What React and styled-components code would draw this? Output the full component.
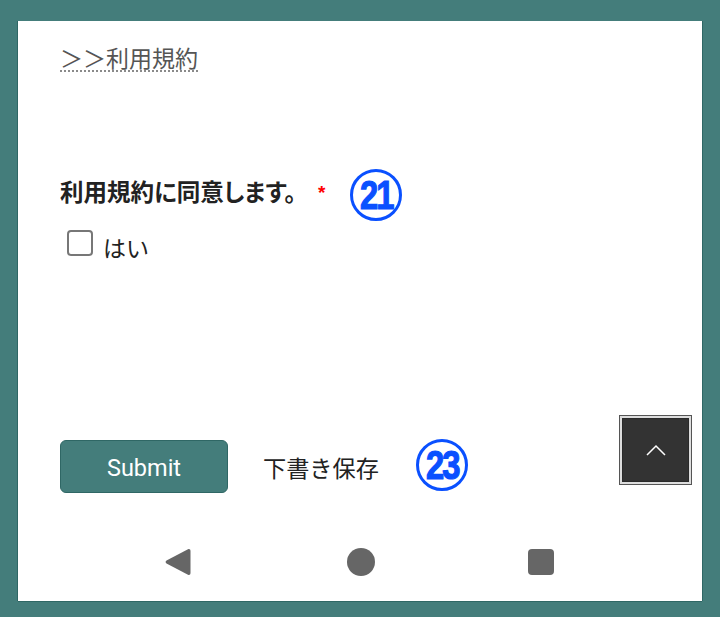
import React from "react";
import styled, { createGlobalStyle } from "styled-components";

const Global = createGlobalStyle`
  html, body { margin: 0; padding: 0; }
  body {
    background: #447d7b;
    font-family: "Roboto", "Noto Sans CJK JP", sans-serif;
  }
`;

const Page = styled.div`
  width: 720px;
  height: 617px;
  padding: 21px 18px 16px;
  box-sizing: border-box;
  background: #447d7b;
`;

const Screen = styled.main`
  position: relative;
  height: 580px;
  box-sizing: border-box;
  padding: 22px 42px 0;
  background: #fff;
  display: flex;
  flex-direction: column;
  box-shadow: -1px 0 0 #2f6765, 0 1px 0 #2f6765, 1px 0 0 #2f6765;
`;

const TermsLink = styled.a`
  align-self: flex-start;
  font-family: "Noto Sans CJK JP", sans-serif;
  font-size: 23px;
  line-height: 29px;
  color: #555;
  border-bottom: 2px dotted #8a8a8a;
  height: 27px;
  margin-bottom: 97px;
`;

const Question = styled.div`
  display: flex;
  align-items: center;
  height: 52px;
`;

const Label = styled.label`
  font-family: "Noto Sans CJK JP", sans-serif;
  font-size: 23.5px;
  font-weight: 700;
  font-feature-settings: "palt";
  color: #222;
  line-height: 30px;
  margin-bottom: 8px;
`;

const Required = styled.span`
  font-family: "Liberation Sans", sans-serif;
  color: #f00;
  font-size: 19px;
  font-weight: 700;
  margin-left: 22px;
  margin-right: 25px;
  margin-bottom: 4px;
`;

const Badge = styled.span`
  width: 52px;
  height: 52px;
  flex: none;
  box-sizing: border-box;
  border: 3px solid #0a50ff;
  border-radius: 50%;
  color: #0a50ff;
  display: flex;
  align-items: center;
  justify-content: center;
`;

const BadgeText = styled.span`
  display: inline-block;
  font-family: "Liberation Sans", sans-serif;
  font-size: 41px;
  line-height: 1;
  font-weight: 700;
  letter-spacing: -2.5px;
  -webkit-text-stroke: 1.2px #0a50ff;
  transform: scaleX(0.8);
`;

const DraftBadge = styled(Badge)`
  margin-bottom: 3px;
`;

const CheckRow = styled.div`
  display: flex;
  align-items: flex-start;
  margin: 9px 0 0 7px;
  height: 28px;
`;

const CheckBox = styled.span`
  width: 26px;
  height: 26px;
  box-sizing: border-box;
  border: 2px solid #777;
  border-radius: 4px;
  background: #fff;
  margin-right: 10px;
`;

const CheckText = styled.span`
  font-family: "Noto Sans CJK JP", sans-serif;
  font-size: 23px;
  line-height: 28px;
  color: #222;
  padding-top: 3px;
`;

const Actions = styled.div`
  display: flex;
  align-items: center;
  height: 53px;
  margin-top: 182px;
`;

const SubmitButton = styled.button`
  width: 168px;
  height: 53px;
  box-sizing: border-box;
  border: 1px solid #2f6765;
  border-radius: 6px;
  background: #447d7b;
  color: #fff;
  font-family: "Roboto", sans-serif;
  font-size: 23.5px;
  padding: 2px 0 0;
`;

const DraftButton = styled.span`
  font-family: "Noto Sans CJK JP", sans-serif;
  font-size: 23.2px;
  color: #222;
  margin-left: 35px;
  margin-right: 37px;
  margin-top: 1px;
`;

const NavBar = styled.nav`
  display: flex;
  align-items: center;
  margin-top: 54px;
  margin-left: 105px;
  height: 30px;
`;

const NavSlot = styled.span`
  display: flex;
  width: ${(p) => p.$width}px;
`;

const BackIcon = () => (
  <svg width="26" height="28" viewBox="0 0 26 28">
    <path
      d="M23 1.2 C24.5 .5 25.5 1.5 25.5 3 L25.5 25 C25.5 26.5 24.5 27.5 23 26.8 L1.5 15.5 C.3 14.8 .3 13.2 1.5 12.5 Z"
      fill="#666"
    />
  </svg>
);

const HomeDot = styled.span`
  width: 28px;
  height: 28px;
  border-radius: 50%;
  background: #666;
`;

const RecentSquare = styled.span`
  width: 26px;
  height: 26px;
  border-radius: 4px;
  background: #666;
`;

const ScrollTop = styled.button`
  position: absolute;
  left: 602px;
  top: 395px;
  width: 71px;
  height: 68px;
  box-sizing: border-box;
  padding: 0;
  background: #333;
  border: 2px solid #ddd;
  box-shadow: 0 0 0 1px #555, inset 0 0 0 1px #2a2a2a;
  display: flex;
  align-items: center;
  justify-content: center;
`;

export default function App() {
  return (
    <Page>
      <Global />
      <Screen>
        <TermsLink>＞＞利用規約</TermsLink>
        <Question>
          <Label>利用規約に同意します。</Label>
          <Required>*</Required>
          <Badge>
            <BadgeText>21</BadgeText>
          </Badge>
        </Question>
        <CheckRow>
          <CheckBox />
          <CheckText>はい</CheckText>
        </CheckRow>
        <Actions>
          <SubmitButton>Submit</SubmitButton>
          <DraftButton>下書き保存</DraftButton>
          <DraftBadge>
            <BadgeText>23</BadgeText>
          </DraftBadge>
        </Actions>
        <NavBar>
          <NavSlot $width={182}>
            <BackIcon />
          </NavSlot>
          <NavSlot $width={181}>
            <HomeDot />
          </NavSlot>
          <RecentSquare />
        </NavBar>
        <ScrollTop aria-label="top">
          <svg width="20" height="12" viewBox="0 0 20 12">
            <path d="M1 11 L10 2 L19 11" fill="none" stroke="#fff" strokeWidth="1.5" />
          </svg>
        </ScrollTop>
      </Screen>
    </Page>
  );
}
